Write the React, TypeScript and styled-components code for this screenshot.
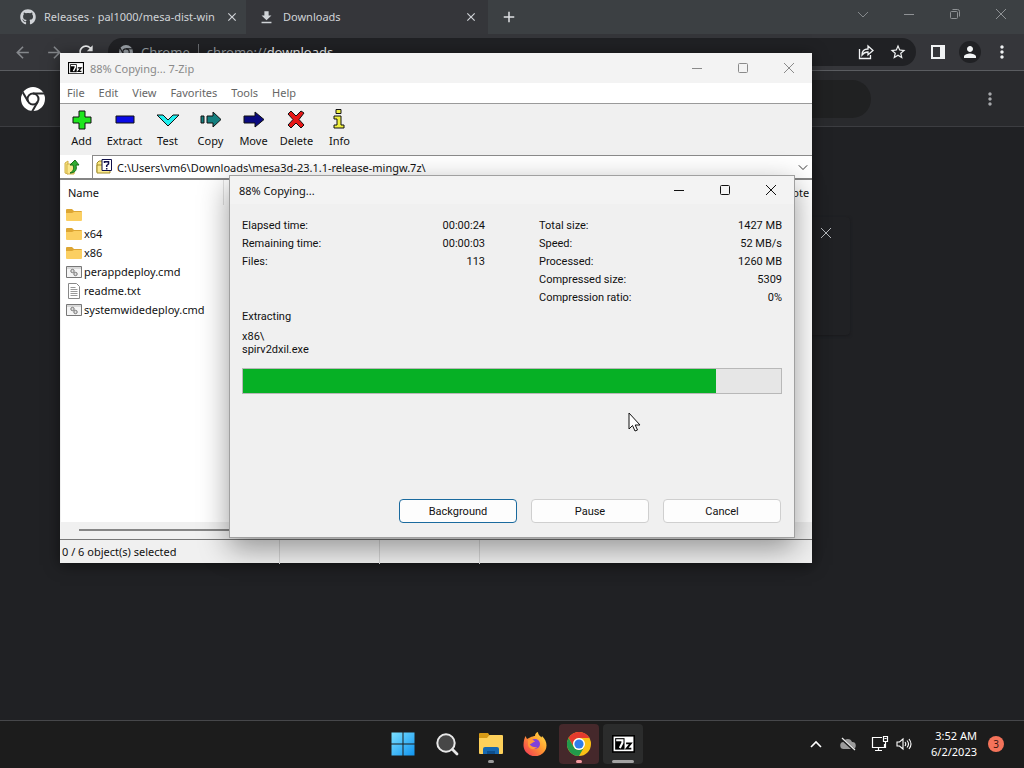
import React from "react";
import styled, { createGlobalStyle } from "styled-components";
import { FaGithub } from "react-icons/fa";
import {
  MdArrowBack,
  MdArrowForward,
  MdClose,
  MdDownload,
  MdMoreVert,
  MdPerson,
  MdRefresh,
  MdStarBorder,
  MdAdd,
} from "react-icons/md";

const UI = `"Noto Sans", "Open Sans", sans-serif`;
const DIALOG = `Roboto, "Liberation Sans", sans-serif`;

const Global = createGlobalStyle`
  * { box-sizing: border-box; }
  body { margin: 0; background: #202124; font-family: ${UI}; font-size: 11px; overflow: hidden; }
  button { font: inherit; color: inherit; border: 0; padding: 0; background: none; display: flex; align-items: center; justify-content: center; }
  svg { display: block; flex: none; }
`;

const Desktop = styled.div`
  position: relative;
  display: flex;
  flex-direction: column;
  min-height: 100vh;
`;

/* ---------- Browser ---------- */

const Browser = styled.main`
  flex: 1;
  display: flex;
  flex-direction: column;
  background: #202124;
  color: #dfe1e5;
`;

const TabStrip = styled.div`
  display: flex;
  height: 34px;
  background: #3c4043;
`;

const Tab = styled.div<{ $active?: boolean }>`
  display: flex;
  align-items: center;
  gap: 8px;
  width: ${(p) => (p.$active ? 242 : 246)}px;
  padding: 0 ${(p) => (p.$active ? 10 : 7)}px 0 ${(p) => (p.$active ? 12 : 20)}px;
  background: ${(p) => (p.$active ? "#35363a" : "#3c4043")};
  color: #d0d3d7;
`;

const TabTitle = styled.span`
  flex: 1;
  line-height: 16px;
  padding-bottom: 1px;
  white-space: nowrap;
  overflow: hidden;
`;

const NewTab = styled.button`
  width: 42px;
`;

const Caption = styled.div`
  display: flex;
  margin-left: auto;
  height: 28px;
`;

const CaptionButton = styled.button<{ $tone: string }>`
  width: 46px;
  color: ${(p) => p.$tone};
`;

const NavBar = styled.div`
  display: flex;
  align-items: center;
  height: 37px;
  padding: 0 10px 0 12px;
  background: #35363a;
  border-bottom: 1px solid #5a5c60;
`;

const NavButton = styled.button<{ $dim?: boolean }>`
  width: 20px;
  height: 28px;
  margin-right: 12px;
  color: ${(p) => (p.$dim ? "#85888c" : "#f1f3f4")};
`;

const Omnibox = styled.div`
  display: flex;
  flex: 1;
  align-items: center;
  gap: 8px;
  height: 28px;
  margin-right: 10px;
  padding: 0 6px 0 11px;
  border-radius: 14px;
  background: #202124;
  color: #9aa0a6;
  font-size: 13px;
  b { color: #f1f3f4; font-weight: 400; }
`;

const Divider = styled.span`
  width: 1px;
  height: 16px;
  background: #6a6d71;
`;

const Spacer = styled.span`
  flex: 1;
`;

const ToolButton = styled.button<{ $round?: boolean }>`
  width: ${(p) => (p.$round ? 22 : 24)}px;
  height: 22px;
  margin: 0 ${(p) => (p.$round ? 9 : 0)}px;
  border-radius: 11px;
  background: ${(p) => (p.$round ? "#202124" : "none")};
  color: #f1f3f4;
`;

const PageHeader = styled.header`
  display: flex;
  align-items: center;
  height: 56px;
  padding: 0 24px 0 21px;
  background: #292a2d;
  border-bottom: 1px solid #3c3d41;
  color: #fff;
`;

const PageSearch = styled.div`
  flex: 1;
  height: 38px;
  margin: 0 109px 0 200px;
  border-radius: 19px;
  background: #202122;
`;

const PageBody = styled.div`
  flex: 1;
  padding: 90px 174px 0;
`;

const DownloadCard = styled.section`
  display: flex;
  justify-content: flex-end;
  height: 118px;
  padding: 10px 18px;
  border-radius: 4px;
  background: #202124;
  box-shadow: 0 1px 3px #191a1d;
  color: #b4b7bb;
`;

const CardClose = styled.button`
  width: 12px;
  height: 12px;
`;

/* ---------- 7-Zip windows ---------- */

const FileManager = styled.section`
  position: absolute;
  left: 60px;
  top: 53px;
  width: 752px;
  background: #f0f0f0;
  color: #111;
  box-shadow: 0 2px 14px rgba(0, 0, 0, 0.5);
`;

const TitleBar = styled.header<{ $inactive?: boolean }>`
  display: flex;
  align-items: center;
  gap: 6px;
  height: ${(p) => (p.$inactive ? 30 : 28)}px;
  padding-left: ${(p) => (p.$inactive ? 8 : 9)}px;
  background: #f3f3f3;
  color: ${(p) => (p.$inactive ? "#8a8a8a" : "#111")};
`;

const WindowTitle = styled.h1`
  margin: 0;
  font-size: 11px;
  font-weight: 400;
`;

const MenuBar = styled.nav`
  display: flex;
  gap: 14px;
  height: 21px;
  padding: 0 7px 1px;
  background: #fff;
  border-bottom: 1px solid #9a9a9a;
  color: #666;
`;

const Toolbar = styled.div`
  display: flex;
  height: 51px;
`;

const Tool = styled.button`
  && {
    flex-direction: column;
    justify-content: flex-start;
    gap: 1px;
    width: 43px;
    padding-top: 4px;
  }
`;

const AddressRow = styled.div`
  display: flex;
  height: 25px;
  background: #fff;
  border-bottom: 2px solid #858585;
`;

const UpButton = styled.button`
  && {
    width: 32px;
    padding-right: 8px;
  }
`;

const AddressBox = styled.label`
  display: flex;
  flex: 1;
  align-items: center;
  gap: 4px;
  padding: 0 4px 0 3px;
  border: solid #8a8a8a;
  border-width: 1px 0 0 1px;
`;

const AddressInput = styled.input`
  flex: 1;
  min-width: 0;
  padding: 0;
  border: 0;
  outline: 0;
  background: none;
  font: 11px ${UI};
  color: #111;
`;

const FileArea = styled.div`
  min-height: 342px;
  margin-left: 1px;
  background: #fff;
`;

const FileTable = styled.table`
  width: 100%;
  border-collapse: collapse;
  table-layout: fixed;
  th, td { padding: 0; font-weight: 400; text-align: left; }
  th { height: 25px; padding-left: 7px; }
  th:first-child { width: 162px; border-right: 1px solid #e2e2e2; }
  th:last-child { width: 28px; padding-left: 0; }
  td { height: 19px; }
`;

const FileName = styled.span`
  display: flex;
  align-items: center;
  gap: 2px;
  padding-left: 5px;
`;

const ScrollTrack = styled.div`
  height: 18px;
  padding: 7px 40px 8px 19px;
  border-bottom: 1px solid #777;
  background: #f0f0f0;
`;

const ScrollThumb = styled.div`
  height: 2px;
  background: #858585;
`;

const StatusBar = styled.footer`
  display: grid;
  grid-template-columns: 220px 100px 100px 1fr;
  height: 23px;
  line-height: 24px;
  span { padding-left: 2px; border-right: 1px solid #d4d4d4; }
`;

const ProgressDialog = styled.section`
  position: absolute;
  left: 229px;
  top: 175px;
  width: 566px;
  border: 1px solid #a0a0a0;
  background: #f0f0f0;
  color: #111;
  box-shadow: 0 10px 28px rgba(0, 0, 0, 0.4);
`;

const DialogBody = styled.div`
  padding: 12px 12px 14px;
  font-family: ${DIALOG};
`;

const Stats = styled.div`
  display: grid;
  grid-template-columns: 1fr 1fr;
  gap: 54px;
`;

const StatTable = styled.table`
  width: 100%;
  border-collapse: collapse;
  align-self: start;
  th, td { height: 18px; padding: 0; font-weight: 400; text-align: left; }
  td { text-align: right; }
`;

const Operation = styled.p`
  margin: 4px 0 6px;
  line-height: 14px;
`;

const CurrentFile = styled.p`
  margin: 0 0 12px;
  line-height: 13px;
`;

const Progress = styled.progress`
  display: block;
  width: 100%;
  height: 26px;
  border: 1px solid #b8b8b8;
  appearance: none;
  background: #e6e6e6;
  &::-webkit-progress-bar { background: #e6e6e6; }
  &::-webkit-progress-value { background: #06b025; }
`;

const Actions = styled.div`
  display: flex;
  justify-content: flex-end;
  gap: 14px;
  margin-top: 105px;
  padding-right: 1px;
`;

const Action = styled.button<{ $primary?: boolean }>`
  && {
    width: 118px;
    height: 24px;
    border: 1px solid ${(p) => (p.$primary ? "#1a6a9e" : "#cfcfcf")};
    border-radius: 4px;
    background: #fdfdfd;
  }
`;

const Pointer = styled.svg`
  position: absolute;
  left: 628px;
  top: 412px;
`;

/* ---------- Taskbar ---------- */

const Taskbar = styled.footer`
  display: grid;
  grid-template-columns: 1fr auto 1fr;
  height: 48px;
  border-top: 1px solid #46474a;
  background: #1c1c1c;
  color: #fff;
`;

const Apps = styled.div`
  display: flex;
  grid-column: 2;
  align-items: center;
  gap: 4px;
  padding: 0 0 1px 2px;
`;

const AppButton = styled.button<{ $tile?: string; $mark?: string; $wide?: boolean }>`
  && {
    position: relative;
    width: 40px;
    height: 40px;
    border-radius: 4px;
    background: ${(p) => p.$tile || "none"};
  }
  &::after {
    content: "";
    position: absolute;
    bottom: 1px;
    width: ${(p) => (p.$wide ? 22 : 6)}px;
    height: 3px;
    border-radius: 2px;
    background: ${(p) => p.$mark || "none"};
  }
`;

const Tray = styled.div`
  display: flex;
  align-items: center;
  justify-content: flex-end;
  padding: 0 20px 1px 0;
`;

const TrayButton = styled.button<{ $w: number }>`
  width: ${(p) => p.$w}px;
  height: 40px;
`;

const Clock = styled.time`
  width: 65px;
  margin-right: 11px;
  text-align: right;
  line-height: 16px;
`;

const Count = styled.span`
  width: 16px;
  height: 16px;
  border-radius: 8px;
  background: #f4735a;
  color: #3a1510;
  font-size: 10px;
  line-height: 16px;
  text-align: center;
`;

/* ---------- Drawings ---------- */

const line = { fill: "none", stroke: "currentColor" };

const Minimise = () => (
  <svg width="12" height="12" {...line}><path d="M1 6.5h10" /></svg>
);
const Maximise = () => (
  <svg width="12" height="12" {...line}><rect x="1.5" y="1.5" width="9" height="9" rx="1" /></svg>
);
const Restore = () => (
  <svg width="12" height="12" {...line}><rect x="1.5" y="3.5" width="7" height="7" rx="1" /><path d="M3.5 1.5h5a2 2 0 0 1 2 2v5" /></svg>
);
const Cross = () => (
  <svg width="12" height="12" {...line}><path d="M1 1l10 10M11 1L1 11" /></svg>
);
const Chevron = ({ size = 12 }: { size?: number }) => (
  <svg width={size} height={size} viewBox="0 0 12 12" {...line}><path d="M1 4l5 5 5-5" /></svg>
);

const ChromeMono = ({ size, gap }: { size: number; gap: string }) => (
  <svg width={size} height={size} viewBox="0 0 24 24">
    <circle cx="12" cy="12" r="12" fill="currentColor" />
    <g fill="none" stroke={gap} strokeWidth="2">
      <circle cx="12" cy="12" r="5.500" />
      <path d="M12 6.500h11" />
      <path d="M12 6.500h11" transform="rotate(120 12 12)" />
      <path d="M12 6.500h11" transform="rotate(240 12 12)" />
    </g>
  </svg>
);

const SevenZip = ({ width }: { width: number }) => (
  <svg width={width} viewBox="0 0 22 17">
    <path d="M0 0h22v17H0z" fill="#000" />
    <path d="M1.500 1.500h19v14h-19z" fill="#fff" />
    <path d="M3 3h9v11H3z" fill="#000" />
    <path d="M4 5h6v2.500L7.500 12.500" fill="none" stroke="#fff" strokeWidth="2" />
    <path d="M13.500 8h4.500l-4 5h4.500" fill="none" stroke="#000" strokeWidth="1.800" />
  </svg>
);

const toolShapes: Record<string, React.ReactNode> = {
  Add: <path d="M12 3h6v6h6v6h-6v6h-6v-6H6V9h6z" fill="#1fe61f" />,
  Extract: <path d="M6 8h18v7H6z" fill="#0a0ae6" />,
  Test: <path d="M4 7h6l5 5 5-5h6L15 18z" fill="#20f0f0" />,
  Copy: <><path d="M5 8h3v7H5z" fill="#158080" /><path d="M11 8h6V4l8 7.500-8 7.500v-4h-6z" fill="#158080" /></>,
  Move: <path d="M5 8h11V4l9 7.500-9 7.500v-4H5z" fill="#0a0a80" />,
  Delete: <path d="M6 6l3-3 5 5 5-5 3 2-5 6.500 5 5.500-3 3-5-5-5 5-3-3 5-5.500z" fill="#e61717" />,
  Info: <><path d="M11 1.500h5v4h-5z" fill="#f0f040" /><path d="M9 8h7v9h3v3H9v-3h3v-6H9z" fill="#f0f040" /></>,
};

const ToolIcon = ({ name }: { name: string }) => (
  <svg width="30" height="24" viewBox="0 0 30 24" stroke="#111">{toolShapes[name]}</svg>
);

const UpFolder = () => (
  <svg width="16" height="18" viewBox="0 0 16 18">
    <path d="M1 5l3-2v13l-3-1z" fill="#f7e27c" stroke="#d1b14a" />
    <path d="M3 6h8l-1 10H3z" fill="#fbe88c" stroke="#d1b14a" />
    <path d="M6 15c4-2 4-5 3-8H6l5-5 4 5h-3c1 4 0 8-6 8z" fill="#32ad32" stroke="#176d17" />
  </svg>
);

const HelpFolder = () => (
  <svg width="17" height="16" viewBox="0 0 17 16">
    <path d="M1 4l2-2h4v11H1z" fill="#fbe77c" stroke="#a08c28" />
    <path d="M1 6h13v8H1z" fill="#fbea90" stroke="#a08c28" />
    <path d="M6 .500h9.500v11H6z" fill="#fff" stroke="#10104a" />
    <path d="M8.500 4V2.800h4V5L10.700 6.500V8M10.700 9v1.500" fill="none" stroke="#10104a" strokeWidth="1.500" />
  </svg>
);

const Folder = () => (
  <svg width="16" height="14" viewBox="0 0 16 14">
    <path d="M0 2q0-1 1-1h5l2 2h7q1 0 1 1v3H0z" fill="#dda634" />
    <path d="M0 5h6l2-1h8v8q0 1-1 1H1q-1 0-1-1z" fill="#fbcf62" />
  </svg>
);

const Script = () => (
  <svg width="16" height="12" viewBox="0 0 16 12">
    <path d="M.500.500h15v11H.500z" fill="#f5f5f5" stroke="#777" />
    <path d="M1 2h14" stroke="#bbb" />
    <circle cx="6.500" cy="5" r="1.700" fill="#ddd" stroke="#777" />
    <circle cx="9.500" cy="8" r="1.700" fill="#ddd" stroke="#777" />
  </svg>
);

const TextFile = () => (
  <svg width="16" height="16" viewBox="0 0 16 16">
    <path d="M2.500.500h8l3 3v12h-11z" fill="#fff" stroke="#888" />
    <path d="M4.500 4.500h5M4.500 6.500h7M4.500 8.500h7M4.500 10.500h7M4.500 12.500h7" stroke="#999" />
  </svg>
);

const Share = () => (
  <svg width="16" height="16" viewBox="0 0 16 16" fill="none" stroke="currentColor" strokeWidth="1.300">
    <path d="M1.500 5v9.500h11V11" />
    <path d="M4 11c0-4 2-6 6-6V2l5 4.500-5 4.300V8C7 8 5.500 9 4 11z" />
  </svg>
);

const SidePanel = () => (
  <svg width="14" height="14"><path d="M0 0h14v14H0zM2 2v10h7V2z" fill="currentColor" fillRule="evenodd" /></svg>
);

const WindowsLogo = () => (
  <svg width="24" height="24" viewBox="0 0 24 24">
    <defs><linearGradient id="win" x2="1" y2="1"><stop stopColor="#7be0ff" /><stop offset="1" stopColor="#1094f0" /></linearGradient></defs>
    <path d="M.500.500h11v11H.500zM12.500.500h11v11h-11zM.500 12.500h11v11H.500zM12.500 12.500h11v11h-11z" fill="url(#win)" />
  </svg>
);

const SearchGlyph = () => (
  <svg width="24" height="24" viewBox="0 0 24 24" fill="none" stroke="#e8e8e8">
    <circle cx="11" cy="11" r="8.700" fill="#474747" strokeWidth="2" />
    <path d="M17.500 17.500l4.500 4.500" strokeWidth="2.800" strokeLinecap="round" />
  </svg>
);

const Explorer = () => (
  <svg width="24" height="24" viewBox="0 0 24 24">
    <path d="M0 1.500Q0 1 1 1h8l2 3-2 3H0z" fill="#d69a16" />
    <path d="M0 6h8l2.500-3H23q1 0 1 1v17q0 1-1 1H1q-1 0-1-1z" fill="#fdd05a" />
    <path d="M4 22v-5q0-2 2-2h12q2 0 2 2v5z" fill="#1668b0" />
    <path d="M8 22v-3h8v3z" fill="#0d4e8c" />
  </svg>
);

const Firefox = () => (
  <svg width="24" height="24" viewBox="0 0 24 24">
    <defs><linearGradient id="fox" x1="1" x2="0" y2="1"><stop stopColor="#ffe94a" /><stop offset=".45" stopColor="#ff9a30" /><stop offset="1" stopColor="#f22c5a" /></linearGradient></defs>
    <path d="M2.500 4L4 7l3-1.500C9 4.500 11 4 12 4c0-2 1-3.500 3-4 0 3 2 3.500 3.500 5.500L19 4c3 3 4.500 6 4.500 9.500A11 10.500 0 1 1 .500 13C.500 9 1.500 6 2.500 4z" fill="url(#fox)" />
    <circle cx="12" cy="12" r="5" fill="#8141d8" />
    <path d="M5 8c4-1 6 0 7 2-3 0-3 2-5 2s3 4 7 3c-3 4-9 2-9-3z" fill="#ff9838" />
  </svg>
);

const ChromeLogo = () => (
  <svg width="24" height="24" viewBox="0 0 24 24">
    <circle cx="12" cy="12" r="12" fill="#fbc116" />
    <path d="M1.600 6A12 12 0 0 1 22.400 6H12a6 6 0 0 0-5.200 9z" fill="#e33b2e" />
    <path d="M1.600 6l5.200 9a6 6 0 0 0 10.400 0L12 24A12 12 0 0 1 1.600 6z" fill="#229a4b" />
    <circle cx="12" cy="12" r="6" fill="#fff" />
    <circle cx="12" cy="12" r="4.600" fill="#2f7de9" />
  </svg>
);

const Cloud = () => (
  <svg width="16" height="14" viewBox="0 0 16 14">
    <path d="M4 12a3.500 3.500 0 0 1-.500-7A4.500 4.500 0 0 1 12 5a3.500 3.500 0 0 1 .500 7z" fill="#9a9a9a" />
    <path d="M2 2l12 11" stroke="#1c1c1c" strokeWidth="2.600" />
    <path d="M2 1l13 12" stroke="#eee" strokeWidth="1.200" />
  </svg>
);

const Network = () => (
  <svg width="18" height="18" viewBox="0 0 18 18" fill="none" stroke="#fff" strokeWidth="1.200">
    <path d="M11 2.500H1.500v10h12V9M7.500 12.500v3M4 15.500h7" />
    <path d="M12.500 1.500h4v5h-4zM14.500 7v6M13.500 3.500h2" />
  </svg>
);

const Speaker = () => (
  <svg width="16" height="14" viewBox="0 0 16 14" fill="none" stroke="#fff" strokeWidth="1.100">
    <path d="M1 5h2.500L7 2v10L3.500 9H1zM9 5q1.500 2 0 4M11 3.500q3 3.500 0 7M13 2q4 5 0 10" />
  </svg>
);

/* ---------- Content ---------- */

const menus = ["File", "Edit", "View", "Favorites", "Tools", "Help"];
const files: [React.FC, string][] = [
  [Folder, ""],
  [Folder, "x64"],
  [Folder, "x86"],
  [Script, "perappdeploy.cmd"],
  [TextFile, "readme.txt"],
  [Script, "systemwidedeploy.cmd"],
];
const timing = [["Elapsed time:", "00:00:24"], ["Remaining time:", "00:00:03"], ["Files:", "113"]];
const sizes = [
  ["Total size:", "1427 MB"],
  ["Speed:", "52 MB/s"],
  ["Processed:", "1260 MB"],
  ["Compressed size:", "5309"],
  ["Compression ratio:", "0%"],
];

const StatList = ({ rows }: { rows: string[][] }) => (
  <StatTable>
    <tbody>
      {rows.map(([label, value]) => (
        <tr key={label}><th scope="row">{label}</th><td>{value}</td></tr>
      ))}
    </tbody>
  </StatTable>
);

const WindowControls = ({ tone, restored }: { tone: string; restored?: boolean }) => (
  <>
    <CaptionButton $tone={tone} aria-label="Minimize"><Minimise /></CaptionButton>
    <CaptionButton $tone={tone} aria-label="Maximize">{restored ? <Restore /> : <Maximise />}</CaptionButton>
    <CaptionButton $tone={tone} aria-label="Close"><Cross /></CaptionButton>
  </>
);

const Dialog = () => (
  <ProgressDialog role="dialog" aria-label="Copying">
    <TitleBar>
      <WindowTitle>88% Copying...</WindowTitle>
      <Caption><WindowControls tone="#111" /></Caption>
    </TitleBar>
    <DialogBody>
      <Stats>
        <StatList rows={timing} />
        <StatList rows={sizes} />
      </Stats>
      <Operation>Extracting</Operation>
      <CurrentFile>x86\<br />spirv2dxil.exe</CurrentFile>
      <Progress value={88} max={100} aria-label="Progress" />
      <Actions>
        <Action $primary>Background</Action>
        <Action>Pause</Action>
        <Action>Cancel</Action>
      </Actions>
    </DialogBody>
  </ProgressDialog>
);

export default function App() {
  return (
    <Desktop>
      <Global />
      <Browser>
        <TabStrip>
          <Tab>
            <FaGithub size={16} />
            <TabTitle>Releases · pal1000/mesa-dist-win</TabTitle>
            <button aria-label="Close tab"><MdClose size={14} /></button>
          </Tab>
          <Tab $active>
            <MdDownload size={17} />
            <TabTitle>Downloads</TabTitle>
            <button aria-label="Close tab"><MdClose size={14} /></button>
          </Tab>
          <NewTab aria-label="New tab"><MdAdd size={18} /></NewTab>
          <Caption>
            <CaptionButton $tone="#85898c" aria-label="Search tabs"><Chevron /></CaptionButton>
            <WindowControls tone="#8f9295" restored />
          </Caption>
        </TabStrip>
        <NavBar>
          <NavButton $dim aria-label="Back"><MdArrowBack size={19} /></NavButton>
          <NavButton $dim aria-label="Forward"><MdArrowForward size={19} /></NavButton>
          <NavButton aria-label="Reload"><MdRefresh size={20} /></NavButton>
          <Omnibox>
            <ChromeMono size={14} gap="#202124" />
            <span>Chrome</span>
            <Divider />
            <span>chrome://<b>downloads</b></span>
            <Spacer />
            <ToolButton aria-label="Share"><Share /></ToolButton>
            <ToolButton aria-label="Bookmark"><MdStarBorder size={18} /></ToolButton>
          </Omnibox>
          <ToolButton aria-label="Side panel"><SidePanel /></ToolButton>
          <ToolButton $round aria-label="Profile"><MdPerson size={18} /></ToolButton>
          <ToolButton aria-label="Menu"><MdMoreVert size={20} /></ToolButton>
        </NavBar>
        <PageHeader>
          <ChromeMono size={24} gap="#292a2d" />
          <PageSearch />
          <button aria-label="More actions"><MdMoreVert size={20} color="#a6a8ab" /></button>
        </PageHeader>
        <PageBody>
          <DownloadCard>
            <CardClose aria-label="Remove from list"><Cross /></CardClose>
          </DownloadCard>
        </PageBody>
      </Browser>

      <FileManager>
        <TitleBar $inactive>
          <SevenZip width={16} />
          <WindowTitle>88% Copying... 7-Zip</WindowTitle>
          <Caption><WindowControls tone="#8a8a8a" /></Caption>
        </TitleBar>
        <MenuBar>{menus.map((m) => <button key={m}>{m}</button>)}</MenuBar>
        <Toolbar>
          {Object.keys(toolShapes).map((name) => (
            <Tool key={name}><ToolIcon name={name} />{name}</Tool>
          ))}
        </Toolbar>
        <AddressRow>
          <UpButton aria-label="Up one level"><UpFolder /></UpButton>
          <AddressBox>
            <HelpFolder />
            <AddressInput aria-label="Path" defaultValue={"C:\\Users\\vm6\\Downloads\\mesa3d-23.1.1-release-mingw.7z\\"} />
            <Chevron size={10} />
          </AddressBox>
        </AddressRow>
        <FileArea>
          <FileTable>
            <thead><tr><th>Name</th><th /><th>Note</th></tr></thead>
            <tbody>
              {files.map(([Icon, name], i) => (
                <tr key={i}><td colSpan={3}><FileName><Icon />{name}</FileName></td></tr>
              ))}
            </tbody>
          </FileTable>
        </FileArea>
        <ScrollTrack><ScrollThumb /></ScrollTrack>
        <StatusBar><span>0 / 6 object(s) selected</span><span /><span /></StatusBar>
      </FileManager>

      <Dialog />
      <Pointer width="14" height="20" viewBox="0 0 14 20">
        <path d="M1 1v16l3.500-3.500L7 19l2.500-1-2.300-5H12z" fill="#fff" stroke="#111" />
      </Pointer>

      <Taskbar>
        <Apps>
          <AppButton aria-label="Start"><WindowsLogo /></AppButton>
          <AppButton aria-label="Search"><SearchGlyph /></AppButton>
          <AppButton $mark="#9a9a9a" aria-label="File Explorer"><Explorer /></AppButton>
          <AppButton aria-label="Firefox"><Firefox /></AppButton>
          <AppButton $tile="#45282b" $mark="#f59aa0" aria-label="Chrome"><ChromeLogo /></AppButton>
          <AppButton $tile="#2b2c2c" $mark="#a3a3a3" $wide aria-label="7-Zip"><SevenZip width={23} /></AppButton>
        </Apps>
        <Tray>
          <TrayButton $w={32} aria-label="Hidden icons">
            <svg width="12" height="12" fill="none" stroke="#fff" strokeWidth="1.600"><path d="M1 9l5-5 5 5" /></svg>
          </TrayButton>
          <TrayButton $w={32} aria-label="OneDrive"><Cloud /></TrayButton>
          <TrayButton $w={32} aria-label="Network"><Network /></TrayButton>
          <TrayButton $w={16} aria-label="Volume"><Speaker /></TrayButton>
          <Clock>3:52 AM<br />6/2/2023</Clock>
          <Count>3</Count>
        </Tray>
      </Taskbar>
    </Desktop>
  );
}
